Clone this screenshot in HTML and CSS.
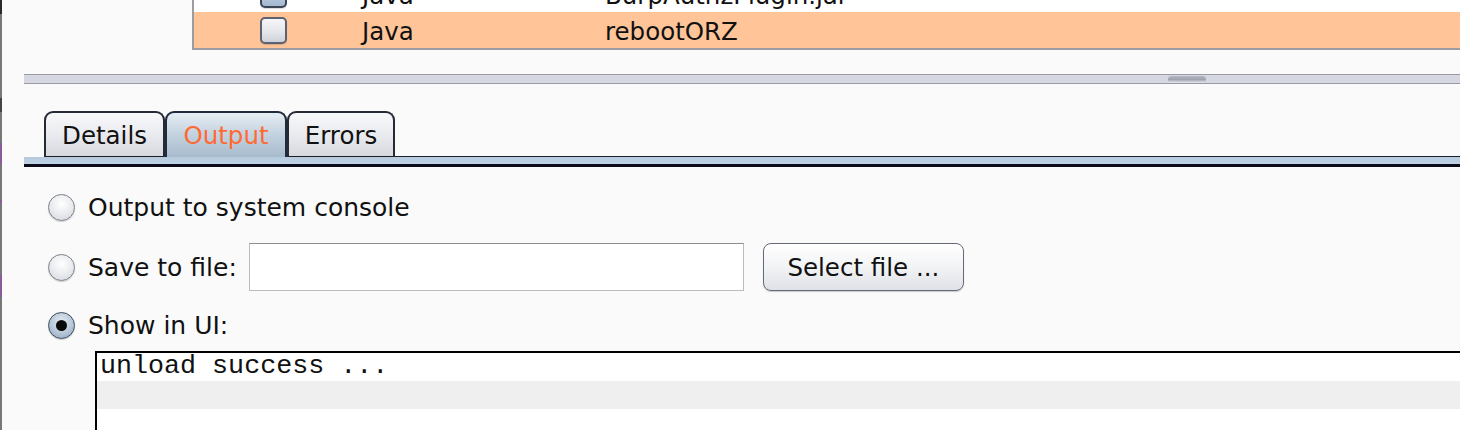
FILE: index.html
```html
<!DOCTYPE html>
<html>
<head>
<meta charset="utf-8">
<link rel="stylesheet" href="styles.css">
</head>
<body>
<div class="screen">
  <div class="edge"></div>
  <div class="content">
    <div class="table">
      <div class="rows">
        <div class="row">
          <div class="cell-check"><span class="checkbox checked"><svg width="14" height="14" viewBox="0 0 14 14"><path d="M2 7.5 L5.5 11 L12 2.5" fill="none" stroke="#1c2430" stroke-width="2.6" stroke-linecap="round" stroke-linejoin="round"/></svg></span></div>
          <div class="cell">Java</div>
          <div class="cell">BurpAuthzPlugin.jar</div>
        </div>
        <div class="row selected">
          <div class="cell-check"><span class="checkbox"></span></div>
          <div class="cell">Java</div>
          <div class="cell">rebootORZ</div>
        </div>
      </div>
    </div>

    <div class="splitter"><span class="grip"></span></div>

    <div class="panel">
      <div class="tabbar">
        <div class="tab tab-details">Details</div>
        <div class="tab tab-output active">Output</div>
        <div class="tab tab-errors">Errors</div>
        <div class="tabfill"></div>
      </div>
      <div class="tabstrip"></div>

      <div class="options">
        <div class="option opt-console">
          <span class="radio"></span>
          <span class="label">Output to system console</span>
        </div>
        <div class="option opt-file">
          <span class="radio"></span>
          <span class="label">Save to file:</span>
          <span class="field"></span>
          <span class="button">Select file ...</span>
        </div>
        <div class="option opt-ui">
          <span class="radio on"><span class="dot"></span></span>
          <span class="label">Show in UI:</span>
        </div>
        <div class="console">
          <div class="line">unload success ...</div>
        </div>
      </div>
    </div>
  </div>
</div>
</body>
</html>
```

FILE: styles.css
```css
html, body {
  margin: 0;
  padding: 0;
}
body {
  background: #fafafa;
  font-family: "DejaVu Sans", "Liberation Sans", sans-serif;
  font-size: 24.5px;
  color: #111;
  overflow: hidden;
}
.screen {
  display: flex;
  width: 1460px;
  height: 430px;
  overflow: hidden;
}
.edge {
  flex: 0 0 2px;
  background: linear-gradient(to bottom,
    #2a2a2a 0, #2a2a2a 14px,
    #777 14px, #777 98px,
    #444 98px, #444 112px,
    #777 112px, #777 143px,
    #8c5a9c 143px, #8c5a9c 164px,
    #777 164px, #777 200px,
    #8c5a9c 200px, #8c5a9c 203px,
    #777 203px, #777 275px,
    #8c5a9c 275px, #8c5a9c 297px,
    #777 297px);
}
.content {
  flex: 1;
  min-width: 0;
}

/* table */
.table {
  margin-left: 190px;
  height: 48px;
  overflow: hidden;
  border-left: 2px solid #9b9ca4;
  border-bottom: 2px solid #9b9ca4;
}
.rows {
  margin-top: -24px;
}
.row {
  display: grid;
  grid-template-columns: 168px 243px 1fr;
  align-items: center;
  height: 36px;
  background: #fff;
}
.row.selected {
  background: #ffc599;
}
.cell-check {
  padding-left: 66px;
  display: flex;
  align-items: center;
}
.cell {
  white-space: nowrap;
  padding-top: 2px;
}
.checkbox {
  box-sizing: border-box;
  width: 27px;
  height: 27px;
  border: 2px solid #5c6270;
  border-radius: 5px;
  background: linear-gradient(to bottom, #f6f6f8 0%, #e4e6ea 55%, #cfd2da 100%);
  box-shadow: 0 1px 1px rgba(0,0,0,0.15);
  display: flex;
  align-items: center;
  justify-content: center;
}
.checkbox.checked {
  background: linear-gradient(to bottom, #d6e2ee 0%, #b4c8dc 60%, #a2b8cf 100%);
  border-color: #3a4656;
}

/* splitter */
.splitter {
  position: relative;
  margin-left: 22px;
  margin-top: 24px;
  height: 8px;
  border-top: 1px solid #9a9aa6;
  border-bottom: 1px solid #9a9aa6;
  background: #d5d8e0;
}
.grip {
  position: absolute;
  left: 1144px;
  top: 1px;
  width: 38px;
  height: 7px;
  border-radius: 4px;
  background: linear-gradient(to bottom, #b4b8c2 0%, #9fa4b0 50%, #e6e8ee 100%);
}

/* tabs */
.panel {
  margin-left: 22px;
}
.tabbar {
  display: flex;
  align-items: flex-end;
  margin-top: 27px;
  padding-left: 20px;
  height: 46px;
}
.tab {
  box-sizing: border-box;
  height: 46px;
  border: 2px solid #252a35;
  border-bottom: 1px solid #1a1f2a;
  border-radius: 9px 9px 0 0;
  background: linear-gradient(to bottom, #f8f8fa 0%, #eaebef 50%, #d6d8de 100%);
  display: flex;
  align-items: center;
  justify-content: center;
  padding-top: 1px;
  color: #111;
  white-space: nowrap;
}
.tab-details { width: 121px; }
.tab-output { width: 122px; }
.tab-errors { width: 108px; }
.tab.active {
  border-color: #1f2a3a;
  border-bottom: none;
  background: linear-gradient(to bottom, #e6edf4 0%, #c6d4e1 45%, #a7bbcd 100%);
  color: #ff6a33;
  padding-top: 0;
}
.tabfill {
  flex: 1;
  align-self: flex-end;
  border-bottom: 1px solid #1a1f2a;
}
.tabstrip {
  height: 7px;
  background: linear-gradient(to bottom, #b6cadd, #c0d2e4);
  border-bottom: 3px solid #0b0b1a;
}

/* options */
.options {
  padding-top: 22px;
  padding-left: 24px;
  display: flex;
  flex-direction: column;
  font-size: 25px;
}
.option {
  display: flex;
  align-items: center;
  min-height: 36px;
}
.opt-console {
  margin-bottom: 18px;
}
.opt-file {
  margin-bottom: 16px;
}
.radio {
  box-sizing: border-box;
  flex: 0 0 27px;
  width: 27px;
  height: 27px;
  border-radius: 50%;
  border: 1.5px solid #7c7f88;
  background: radial-gradient(circle at 50% 35%, #ffffff 0%, #eceef1 45%, #d2d5db 100%);
  box-shadow: 0 1px 1px rgba(0,0,0,0.18);
  display: flex;
  align-items: center;
  justify-content: center;
}
.radio.on {
  border-color: #3d4a5a;
  background: radial-gradient(circle at 50% 35%, #e4ecf4 0%, #b5c7d8 55%, #8ea5bc 100%);
}
.dot {
  width: 11px;
  height: 11px;
  border-radius: 50%;
  background: #0a0a0a;
}
.label {
  margin-left: 13px;
  white-space: nowrap;
}
.field {
  box-sizing: border-box;
  width: 495px;
  height: 48px;
  margin-left: 12px;
  background: #fff;
  border: 1.5px solid #bcbcbc;
  border-top-color: #8e8e8e;
}
.button {
  box-sizing: border-box;
  width: 201px;
  height: 48px;
  margin-left: 19px;
  border: 1.5px solid #666b78;
  border-radius: 8px;
  background: linear-gradient(to bottom, #ffffff 0%, #f2f3f5 50%, #dfe1e7 100%);
  box-shadow: 0 1px 1px rgba(0,0,0,0.2);
  display: flex;
  align-items: center;
  justify-content: center;
  padding-top: 1px;
  font-size: 24.5px;
  white-space: nowrap;
}

/* console */
.console {
  margin-left: 47px;
  margin-top: 8px;
  height: 120px;
  border-top: 2px solid #000;
  border-left: 2px solid #000;
  background: repeating-linear-gradient(to bottom, #ffffff 0, #ffffff 28px, #efefef 28px, #efefef 56px);
}
.line {
  height: 28px;
  line-height: 28px;
  padding-left: 3px;
  font-family: "Liberation Mono", "DejaVu Sans Mono", monospace;
  font-size: 26.7px;
  color: #111;
  white-space: pre;
  margin-top: -1px;
}
```
